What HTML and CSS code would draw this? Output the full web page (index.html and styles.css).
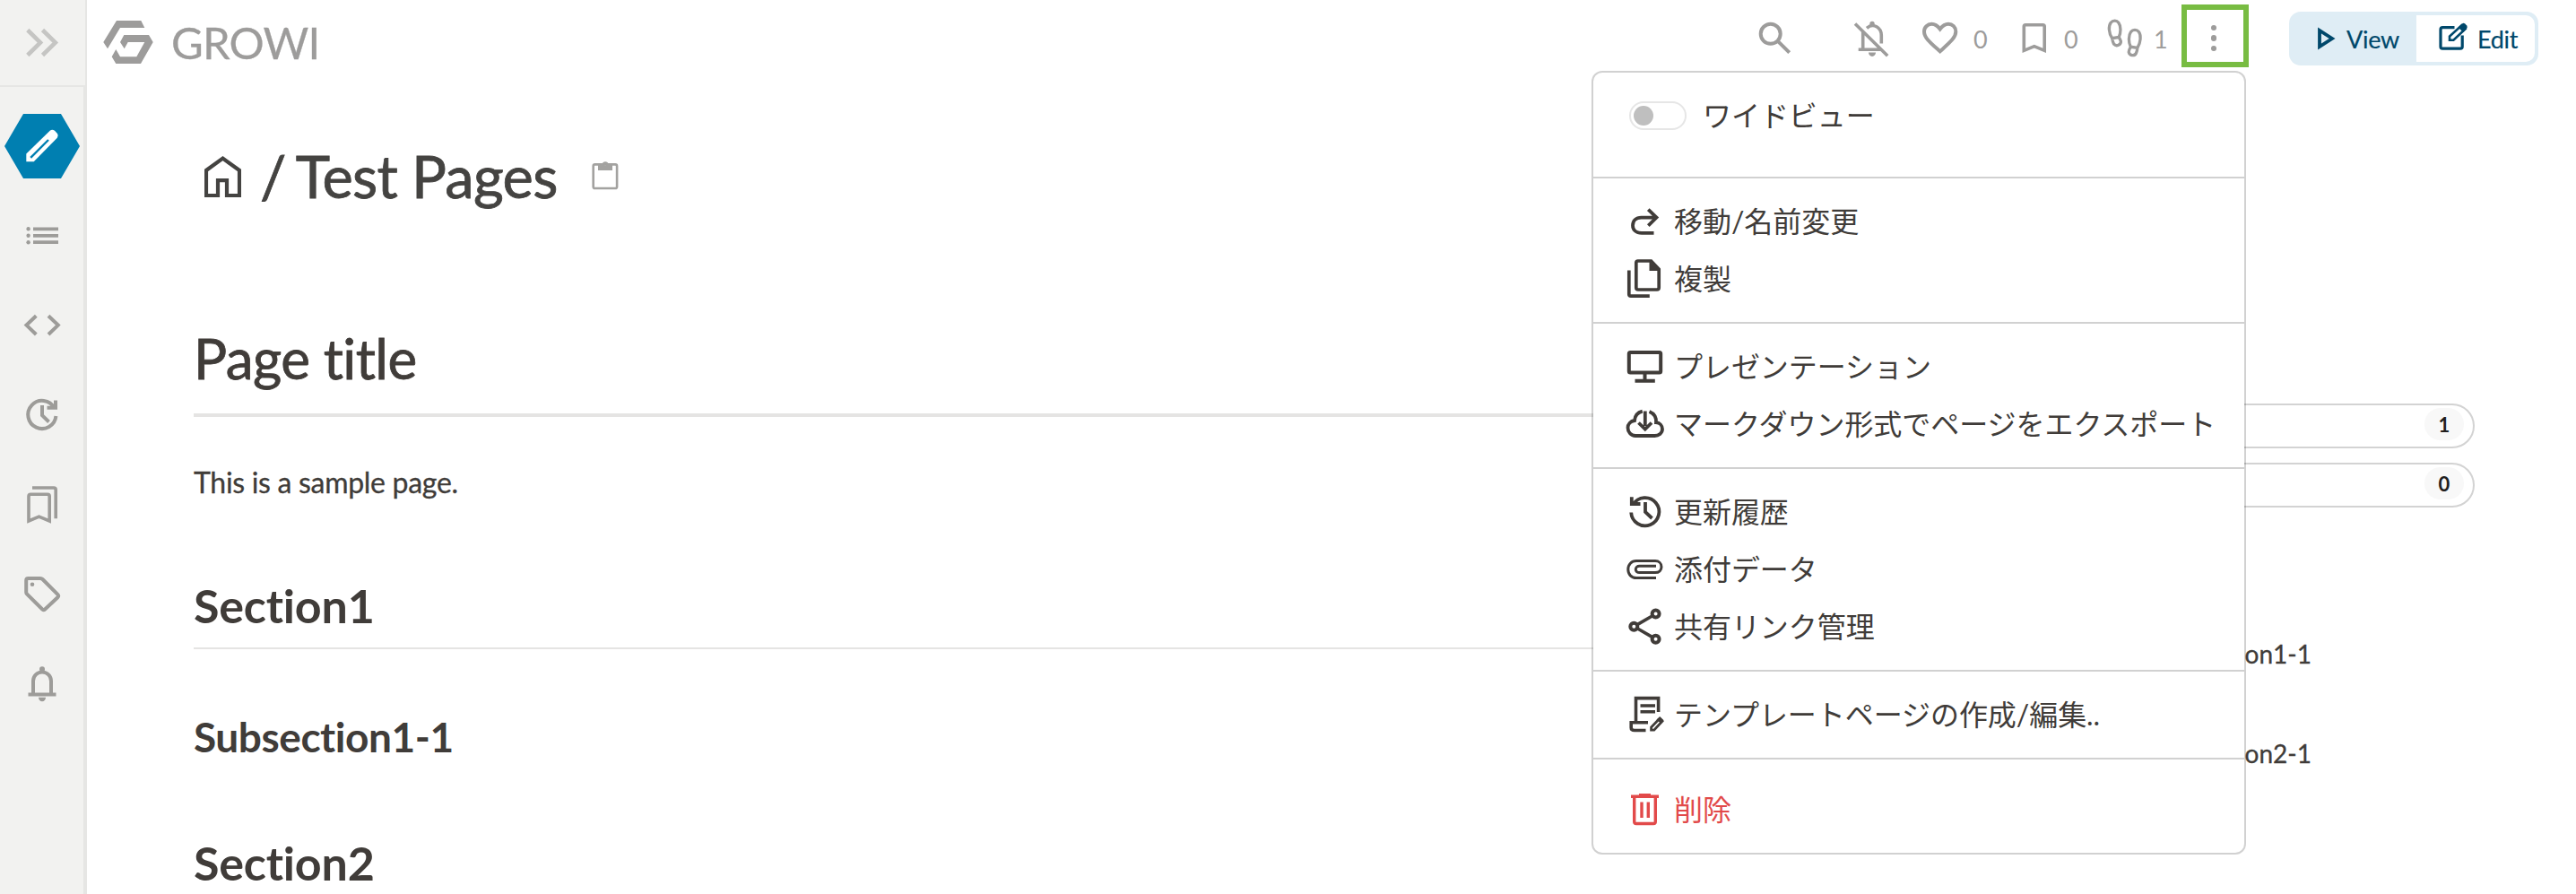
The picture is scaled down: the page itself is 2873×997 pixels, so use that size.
FILE: index.html
```html
<!DOCTYPE html>
<html lang="ja">
<head>
<meta charset="utf-8">
<title>Test Pages - GROWI</title>
<link rel="stylesheet" href="styles.css">
</head>
<body>
<div class="app">
  <aside class="sidebar">
    <div class="sidebar-head">
      <svg class="icon" viewBox="0 0 48 48"><path d="M7.8 9.5 22 23.5 7.8 37.5M24.5 9.5 38.8 23.5 24.5 37.5" stroke-width="4.6"/></svg>
    </div>
    <nav class="sidebar-nav">
      <svg class="hexagon" viewBox="0 0 84 72"><path class="hex-bg" d="M0 36 21 0H63L84 36 63 72H21Z"/><path class="hex-pen" d="M24.3 53.3V44.5L50.7 18.8Q53.3 16.8 56 18.8L59 22Q60.7 24.3 58.8 26.8L32.7 53.3Z"/><path class="hex-slit" d="M29.2 48.8 49 29"/></svg>
      <svg class="icon" viewBox="0 0 48 48"><path d="M14 16.3H42M14 23.8H42M14 31.2H42" stroke-width="3.8"/><g class="solid"><circle cx="8.6" cy="16.3" r="2.2"/><circle cx="8.6" cy="23.8" r="2.2"/><circle cx="8.6" cy="31.2" r="2.2"/></g></svg>
      <svg class="icon" viewBox="0 0 48 48"><path d="M17.3 13.3 6.5 23.6 17.3 34M31 13.3 41.8 23.6 31 34"/></svg>
      <svg class="icon" viewBox="0 0 48 48"><path d="M39.4 25A15.6 15.6 0 1 1 37.6 16M39 7.5V15.8H29.5M24 13V24.2L31.5 31.5"/></svg>
      <svg class="icon" viewBox="0 0 48 48"><path d="M9 42V14.5Q9 12.3 11.2 12.3H30Q32.2 12.3 32.2 14.5V42L20.5 37.2ZM13 5H37Q39.2 5 39.2 7.2V39.3" stroke-width="3.6"/></svg>
      <svg class="icon" viewBox="0 0 48 48"><path d="M8.5 6H22Q23.5 6 24.5 7L41.5 24Q42.8 25.5 41.5 27L27.2 40.5Q25.7 41.8 24.2 40.5L7 23.5Q6.2 22.5 6.2 21.5V8.3Q6.2 6 8.5 6Z"/><circle class="solid" cx="13" cy="12.8" r="2.3"/></svg>
      <svg class="icon" viewBox="0 0 48 48"><path d="M8.5 35.5H39.5M14 35V20.5A10 10 0 0 1 34 20.5V35"/><g class="solid"><circle cx="24" cy="7.3" r="3"/><path d="M20 38.7H28A4 4.6 0 0 1 20 38.7Z"/></g></svg>
    </nav>
  </aside>

  <main class="main">
    <header class="header">
      <div class="brand">
        <svg class="logo" viewBox="0 0 56 48"><path d="M15 0H42.3L46.3 8H19L5 31.3 .3 24ZM23.3 16H51L55.7 24 42 48H14.3L9.7 40.3 14.3 32 19 40.3H37.3L46.3 24H27.7L23.7 31.3 19 24Z"/></svg>
        <span class="brand-name">GROWI</span>
      </div>
      <div class="tools">
        <svg class="icon search" viewBox="0 0 48 48"><circle cx="18.7" cy="18.8" r="11" /><path d="M26.8 26.8 39.7 39.7"/></svg>
        <svg class="icon bell-off" viewBox="0 0 48 48"><path d="M6 7.5 42.2 43.2M9.7 36.2H35M14.7 16V36M19 12.3C26.5 5.8 35.3 12 35.3 20.5V29.5" stroke-width="3.6"/><g class="solid"><circle cx="25" cy="7.4" r="2.7"/><path d="M21 39.5H29A4 4.4 0 0 1 21 39.5Z"/></g></svg>
        <svg class="icon" viewBox="0 0 48 48"><path d="M24.7 38.3C13.5 28.2 7 23 7 16.2 7 11.4 10.8 7.8 15.4 7.8 19.8 7.8 22.5 10.6 24.7 13.4 26.9 10.6 29.8 7.8 34 7.8 38.6 7.8 42.3 11.4 42.3 16.2 42.3 23 35.8 28.2 24.7 38.3Z"/></svg>
        <span class="count count-like">0</span>
        <svg class="icon" viewBox="0 0 48 48"><path d="M12.3 37.4V10.6Q12.3 8.8 14.1 8.8H33.4Q35.2 8.8 35.2 10.6V37.4L23.8 32.6Z" stroke-width="3.6"/></svg>
        <span class="count count-mark">0</span>
        <svg class="icon" viewBox="0 0 48 48"><path d="M9.6 23.6C5.8 18 5.3 10 8.2 6.2 10.5 3.4 14.7 3.4 16.8 6.2 19.8 10.2 19.4 17.5 17.2 22.4ZM9.6 23.6Q10.2 27.5 11.6 30.2A4.5 4.5 0 0 0 19.4 27Q18.6 25 17.2 22.4M30.3 33.2C27.8 28 27.6 20.5 30.6 16.4 32.8 13.6 37.2 13.6 39.4 16.4 42.3 20.5 41.5 28.5 37.9 34.4ZM30.3 33.2Q28.2 37 28.2 39A4.4 4.4 0 0 0 36.4 40.4Q37.5 38.4 37.9 34.4" stroke-width="3.3"/></svg>
        <span class="count count-seen">1</span>
        <button class="kebab"><span class="dot"></span><span class="dot"></span><span class="dot"></span></button>
        <div class="mode">
          <span class="mode-view"><svg class="play" viewBox="0 0 20 26"><path d="M2 4V22L16 13Z"/></svg>View</span>
          <span class="mode-edit"><svg class="compose" viewBox="0 0 36 34"><path d="M19.5 6.7H6.2Q4 6.7 4 8.9V28Q4 30.2 6.2 30.2H26Q28.2 30.2 28.2 28V15.5" stroke-width="3.2"/><path d="M14 20.7V16.6L27.5 4.2 31.6 8.3 18.4 20.7Z" stroke-width="2.6"/><path class="solid" d="M23.5 6.4 28 2.4Q29.6 1.2 31.2 2.4L33.2 4.6Q34.4 6.2 33 8L29.2 12Z"/></svg>Edit</span>
        </div>
      </div>
    </header>

    <div class="path">
      <svg class="home" viewBox="0 0 41 46"><path d="M2 44V16L20.5 2.6 39 16V44H25V27.2H15V44Z"/></svg>
      <span class="slash">/</span>
      <span class="path-name">Test Pages</span>
      <svg class="clip" viewBox="0 0 34 36"><rect x="3.7" y="5.4" width="26.4" height="26.6" rx="1.8"/><path class="solid" fill-rule="evenodd" d="M9 5H13.6A3.6 3.6 0 0 1 20.6 5H25V12H9ZM17 4A1.2 1.2 0 1 0 17.1 4Z"/></svg>
    </div>

    <div class="content">
      <article class="article">
        <h1>Page title</h1>
        <p>This is a sample page.</p>
        <h2>Section1</h2>
        <h3>Subsection1-1</h3>
        <h2>Section2</h2>
      </article>
      <aside class="side">
        <div class="pill"><span class="badge">1</span></div>
        <div class="pill"><span class="badge">0</span></div>
        <ul class="toc">
          <li>Subsection1-1</li>
          <li>Subsection2-1</li>
        </ul>
      </aside>
    </div>
  </main>

  <div class="menu">
    <div class="group group-switch">
      <div class="item"><span class="switch"><span class="knob"></span></span><span>ワイドビュー</span></div>
    </div>
    <div class="group">
      <div class="item"><svg class="icon" viewBox="0 0 48 48"><path d="M33.5 36.8H20C13.5 36.8 10 33.3 10 28.4 10 23.5 13.5 19.6 19.5 19.6H37M27.3 10.6 36.5 19.6 27.3 28.6" stroke-width="3.8"/></svg>移動/名前変更</div>
      <div class="item"><svg class="icon" viewBox="0 0 48 48"><path d="M15.8 4H30.5L39.2 13.3V33.8Q39.2 36 37 36H16Q13.8 36 13.8 33.8V6Q13.8 4 15.8 4ZM5.8 14.5V41Q5.8 43.2 8 43.2H28.8" stroke-width="3.7"/><path class="solid" d="M28.5 4 40 15H28.5Z"/></svg>複製</div>
    </div>
    <div class="group">
      <div class="item"><svg class="icon" viewBox="0 0 48 48"><rect x="5.8" y="8" width="35.4" height="22.5" rx="1.5"/><path d="M23.5 30V39M12.5 39.7H34.8"/></svg>プレゼンテーション</div>
      <div class="item"><svg class="icon" viewBox="0 0 48 48"><path d="M20.8 9.7C15.5 11 12.4 15 12 20 7.6 20.6 4.5 24 4.5 28 4.5 32.6 8 37 13 37H34.5C39 37 43 34 43 29.6 43 25.5 40 22.5 36 22.2 36.4 16.5 33.4 12 28.5 10M23.8 9.5V26M16.5 22.5 23.8 29.6 31 22.5" stroke-width="3.8"/></svg>マークダウン形式でページをエクスポート</div>
    </div>
    <div class="group">
      <div class="item"><svg class="icon" viewBox="0 0 48 48"><path d="M8.2 24.5A15.6 15.6 0 1 0 10.5 15.5M8.8 7.3V15H18.5M24 13V24L31.5 31" stroke-width="3.8"/></svg>更新履歴</div>
      <div class="item"><svg class="icon" viewBox="0 0 48 48"><path d="M36 33.5H14C8.5 33.5 4.8 29.6 4.8 24 4.8 18.4 8.5 14.6 14 14.6H35C39.3 14.6 42 17.5 42 21.2 42 24.9 39.3 27.6 35 27.6H17.5C15 27.6 13.3 26.1 13.3 24 13.3 21.9 15 20.3 17.5 20.3H36" stroke-width="3"/></svg>添付データ</div>
      <div class="item"><svg class="icon" viewBox="0 0 48 48"><circle cx="35.6" cy="9.6" r="4"/><circle cx="11.3" cy="23.7" r="4"/><circle cx="35.6" cy="37.7" r="4"/><path d="M15 21.6 32 11.7M15 25.8 32 35.6" stroke-width="3.6"/></svg>共有リンク管理</div>
    </div>
    <div class="group">
      <div class="item"><svg class="icon" viewBox="0 0 48 48"><path d="M13.5 32V5.6H38.6V21M18.5 14H35M18.5 20.8H35M27 32.8H8.2V38.5Q8.2 41.5 12 41.5H24.5" stroke-width="3.6"/><path d="M30.6 41.2V38L40 28.2 43 31.2 33.8 41.2Z" stroke-width="2.8"/><path class="solid" d="M36.5 29.5 40.4 26.2 44.5 30.3 41.5 34Z"/></svg>テンプレートページの作成/編集..</div>
    </div>
    <div class="group group-delete">
      <div class="item danger"><svg class="icon" viewBox="0 0 48 48"><path d="M8 9.2H39M17 7.6H30M11.7 10V37.3Q11.7 39.5 13.9 39.5H33.1Q35.3 39.5 35.3 37.3V10" stroke-width="3.4"/><path d="M20 15.5V33M27.3 15.5V33" stroke-width="3.4"/></svg>削除</div>
    </div>
  </div>
</div>
</body>
</html>
```
FILE: styles.css
```css
* { box-sizing: border-box; }
body {
  margin: 0;
  background: #fff;
  color: #403c39;
  font-family: Lato, "Noto Sans CJK JP", sans-serif;
  font-variant-ligatures: none;
}
.app {
  position: relative;
  display: flex;
  width: 2873px;
  height: 997px;
  overflow: hidden;
}
svg { display: block; flex: none; }
.icon {
  width: 48px;
  height: 48px;
  fill: none;
  stroke: currentColor;
  stroke-width: 4;
}
.solid { fill: currentColor; stroke: none; }

.sidebar {
  display: flex;
  flex-direction: column;
  width: 97px;
  flex: none;
  background: #f2f2f0;
  color: #9d9c99;
}
.sidebar-head {
  height: 97px;
  padding: 24px 0 0 23px;
  border-right: 2px solid #e6e6e4;
  border-bottom: 2px solid #e6e6e4;
  color: #c5c5c3;
}
.sidebar-nav {
  flex: 1;
  display: flex;
  flex-direction: column;
  gap: 52px;
  padding: 30px 0 0 23px;
  border-right: 4px solid #e6e6e4;
}
.hexagon { width: 84px; height: 72px; margin: 0 0 -12px -18px; }
.hex-bg { fill: #007fb1; }
.hex-pen { fill: #fff; }
.hex-slit { stroke: #007fb1; stroke-width: 2.4; }

.main { flex: 1; min-width: 0; }
.header {
  display: flex;
  justify-content: space-between;
  height: 97px;
  padding: 0 42px 0 18px;
  color: #9d9c9b;
}
.brand { display: flex; align-items: center; gap: 20px; height: 94px; }
.logo { width: 56px; height: 48px; fill: #9d9c9b; }
.brand-name {
  margin-top: -1px;
  font-size: 49px;
  line-height: 60px;
  letter-spacing: -0.8px;
  -webkit-text-stroke: 0.3px currentColor;
}
.tools { display: flex; align-items: center; height: 86px; font-size: 27px; }
.search { margin-right: 59px; }
.bell-off { margin-right: 28px; }
.count-like { width: 58px; padding-left: 14px; }
.count-mark { width: 53px; padding-left: 9px; }
.count-seen { width: 39px; padding-left: 8px; }
.kebab {
  align-self: flex-start;
  display: flex;
  flex-direction: column;
  align-items: center;
  justify-content: center;
  gap: 5px;
  width: 75px;
  height: 70px;
  margin: 5px 45px 0 0;
  padding: 5px 3px 0 0;
  border: 6px solid #78bc42;
  background: #fff;
}
.dot { flex: none; width: 6.6px; height: 6.6px; border-radius: 50%; background: #9d9c9b; }
.mode {
  display: flex;
  width: 278px;
  height: 60px;
  padding: 4px;
  border-radius: 13px;
  background: #dfedf5;
  color: #00486b;
  font-size: 27px;
  letter-spacing: -0.3px;
  -webkit-text-stroke: 0.2px currentColor;
}
.mode-view, .mode-edit { display: flex; align-items: center; }
.mode-view { width: 138px; padding-left: 28px; gap: 12px; }
.mode-edit { flex: 1; padding-left: 23px; gap: 9px; border-radius: 0 10px 10px 0; background: #fff; }
.play { width: 20px; height: 26px; fill: none; stroke: currentColor; stroke-width: 3.8; }
.compose { width: 36px; height: 34px; margin-top: -4px; fill: none; stroke: currentColor; }

.path {
  display: flex;
  align-items: center;
  height: 128px;
  margin: 35px 0 0 131px;
  font-size: 65px;
  letter-spacing: -0.7px;
  color: #444341;
  -webkit-text-stroke: 0.8px currentColor;
}
.home { width: 41px; height: 46px; margin-top: 2px; fill: none; stroke: currentColor; stroke-width: 4.2; }
.slash { margin-left: 21px; }
.path-name { width: 291px; margin-left: 11px; white-space: nowrap; }
.clip { width: 34px; height: 36px; margin-left: 37px; fill: none; stroke: #a3a2a0; stroke-width: 2.6; color: #a3a2a0; }

.content { display: flex; justify-content: space-between; padding: 99px 113px 0 119px; }
.article { width: 1960px; }
h1, h2, h3, p, ul { margin: 0; padding: 0; }
h1 {
  padding-bottom: 22px;
  border-bottom: 4px solid #e5e4e3;
  font-size: 62px;
  line-height: 80px;
  font-weight: 400;
  letter-spacing: -0.55px;
  -webkit-text-stroke: 0.8px currentColor;
}
p { margin-top: 49px; font-size: 32px; line-height: 48px; letter-spacing: -0.3px; -webkit-text-stroke: 0.3px currentColor; }
h2 {
  margin-top: 82px;
  padding-bottom: 16px;
  border-bottom: 2px solid #e5e4e3;
  font-size: 52px;
  line-height: 62px;
  letter-spacing: -0.2px;
}
h3 { margin-top: 70px; font-size: 46px; line-height: 56px; letter-spacing: -0.45px; }
h3 + h2 { margin-top: 81px; }
.side { width: 440px; padding-top: 91px; }
.pill {
  display: flex;
  justify-content: flex-end;
  height: 50px;
  margin-bottom: 16px;
  padding: 3px 10px;
  border: 2px solid #d3d3d3;
  border-radius: 25px;
}
.badge {
  width: 44px;
  height: 36px;
  border-radius: 18px;
  background: #f8f8f8;
  color: #21201e;
  font-size: 22px;
  font-weight: 700;
  line-height: 37px;
  text-align: center;
}
.toc { width: 258px; margin-top: 127px; list-style: none; font-size: 28px; text-align: right; -webkit-text-stroke: 0.3px currentColor; }
.toc li { height: 111px; line-height: 72px; }

.menu {
  position: absolute;
  left: 1775px;
  top: 79px;
  width: 730px;
  height: 874px;
  border: 2px solid rgba(0, 0, 0, 0.18);
  border-radius: 12px;
  background: #fff;
  background-clip: padding-box;
  font-size: 32px;
}
.group { padding: 16px 0 16px 34px; border-bottom: 2px solid #d1d1d1; }
.group-switch { padding-bottom: 36px; }
.group-delete { padding-top: 24px; border-bottom: 0; }
.item { display: flex; align-items: center; gap: 8px; height: 64px; line-height: 64px; letter-spacing: -0.05px; white-space: nowrap; }
.danger { color: #e24a4a; }
.switch { width: 64px; height: 32px; margin: 0 10px 0 6px; padding: 3px; border: 2px solid #e6e6e6; border-radius: 16px; }
.knob { display: block; width: 22px; height: 22px; border-radius: 50%; background: #bfbfbf; }
```
